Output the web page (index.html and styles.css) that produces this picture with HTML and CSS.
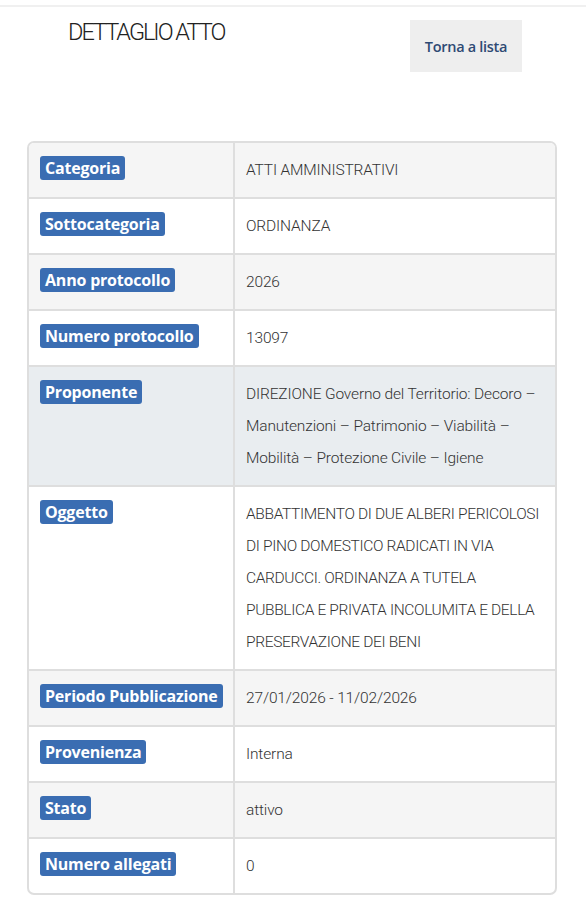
FILE: index.html
```html
<!DOCTYPE html>
<html lang="it">
<head>
<meta charset="utf-8">
<link rel="stylesheet" href="styles.css">
</head>
<body>
<div class="topline"></div>
<header class="head">
  <h1 class="title">DETTAGLIO ATTO</h1>
  <a class="back" href="#">Torna a lista</a>
</header>
<div class="card">
  <div class="row stripe"><div class="k"><span class="badge">Categoria</span></div><div class="v">ATTI AMMINISTRATIVI</div></div>
  <div class="row"><div class="k"><span class="badge">Sottocategoria</span></div><div class="v">ORDINANZA</div></div>
  <div class="row stripe"><div class="k"><span class="badge">Anno protocollo</span></div><div class="v">2026</div></div>
  <div class="row"><div class="k"><span class="badge">Numero protocollo</span></div><div class="v">13097</div></div>
  <div class="row hover"><div class="k"><span class="badge">Proponente</span></div><div class="v">DIREZIONE Governo del Territorio: Decoro –<br>Manutenzioni – Patrimonio – Viabilità –<br>Mobilità – Protezione Civile – Igiene</div></div>
  <div class="row"><div class="k"><span class="badge">Oggetto</span></div><div class="v up">ABBATTIMENTO DI DUE ALBERI PERICOLOSI<br>DI PINO DOMESTICO RADICATI IN VIA<br>CARDUCCI. ORDINANZA A TUTELA<br>PUBBLICA E PRIVATA INCOLUMITA E DELLA<br>PRESERVAZIONE DEI BENI</div></div>
  <div class="row stripe"><div class="k"><span class="badge">Periodo Pubblicazione</span></div><div class="v">27/01/2026 - 11/02/2026</div></div>
  <div class="row"><div class="k"><span class="badge">Provenienza</span></div><div class="v">Interna</div></div>
  <div class="row stripe"><div class="k"><span class="badge">Stato</span></div><div class="v">attivo</div></div>
  <div class="row last"><div class="k"><span class="badge">Numero allegati</span></div><div class="v">0</div></div>
</div>
</body>
</html>
```
FILE: styles.css
```css
* { box-sizing: border-box; }
html, body { margin: 0; padding: 0; background: #fff; }
body { font-family: Roboto, "Liberation Sans", sans-serif; color: #333; }
.topline { height: 7px; border-bottom: 2px solid #f0f0f0; }
.head { display: flex; justify-content: space-between; align-items: flex-start; padding: 13px 64px 0 68px; height: 134px; }
.title { margin: 0; padding-top: 0; font-family: Roboto, sans-serif; font-weight: 300; font-size: 23.5px; letter-spacing: -2px; color: #222; line-height: 24px; }
.back { display: flex; align-items: center; justify-content: center; width: 112px; height: 52px; background: #eeeeee; color: #2e4a74; font-family: "Open Sans", sans-serif; font-weight: 600; font-size: 14.5px; text-decoration: none; letter-spacing: -0.3px; }
.card { margin: 0 29px 0 27px; border: 2px solid #dedede; border-radius: 7px; overflow: hidden; }
.row { display: grid; grid-template-columns: 206px 1fr; border-bottom: 2px solid #dedede; }
.row.last { border-bottom: 0; }
.row.stripe { background: #f5f5f5; }
.row.hover { background: #e9edf0; }
.k { border-right: 2px solid #dedede; padding: 13px 10px 10px 11px; }
.v { padding: 11px 4px 11px 11px; font-family: Roboto, sans-serif; font-weight: 300; font-size: 15.5px; line-height: 32px; letter-spacing: -0.15px; color: #333; white-space: nowrap; }
.v.up { letter-spacing: -0.35px; }
.badge { display: inline-block; background: #3a6db2; color: #fff; font-family: "Open Sans", sans-serif; font-weight: 700; font-size: 16px; line-height: 24px; padding: 0 5px; border-radius: 3px; letter-spacing: -0.2px; }
```
